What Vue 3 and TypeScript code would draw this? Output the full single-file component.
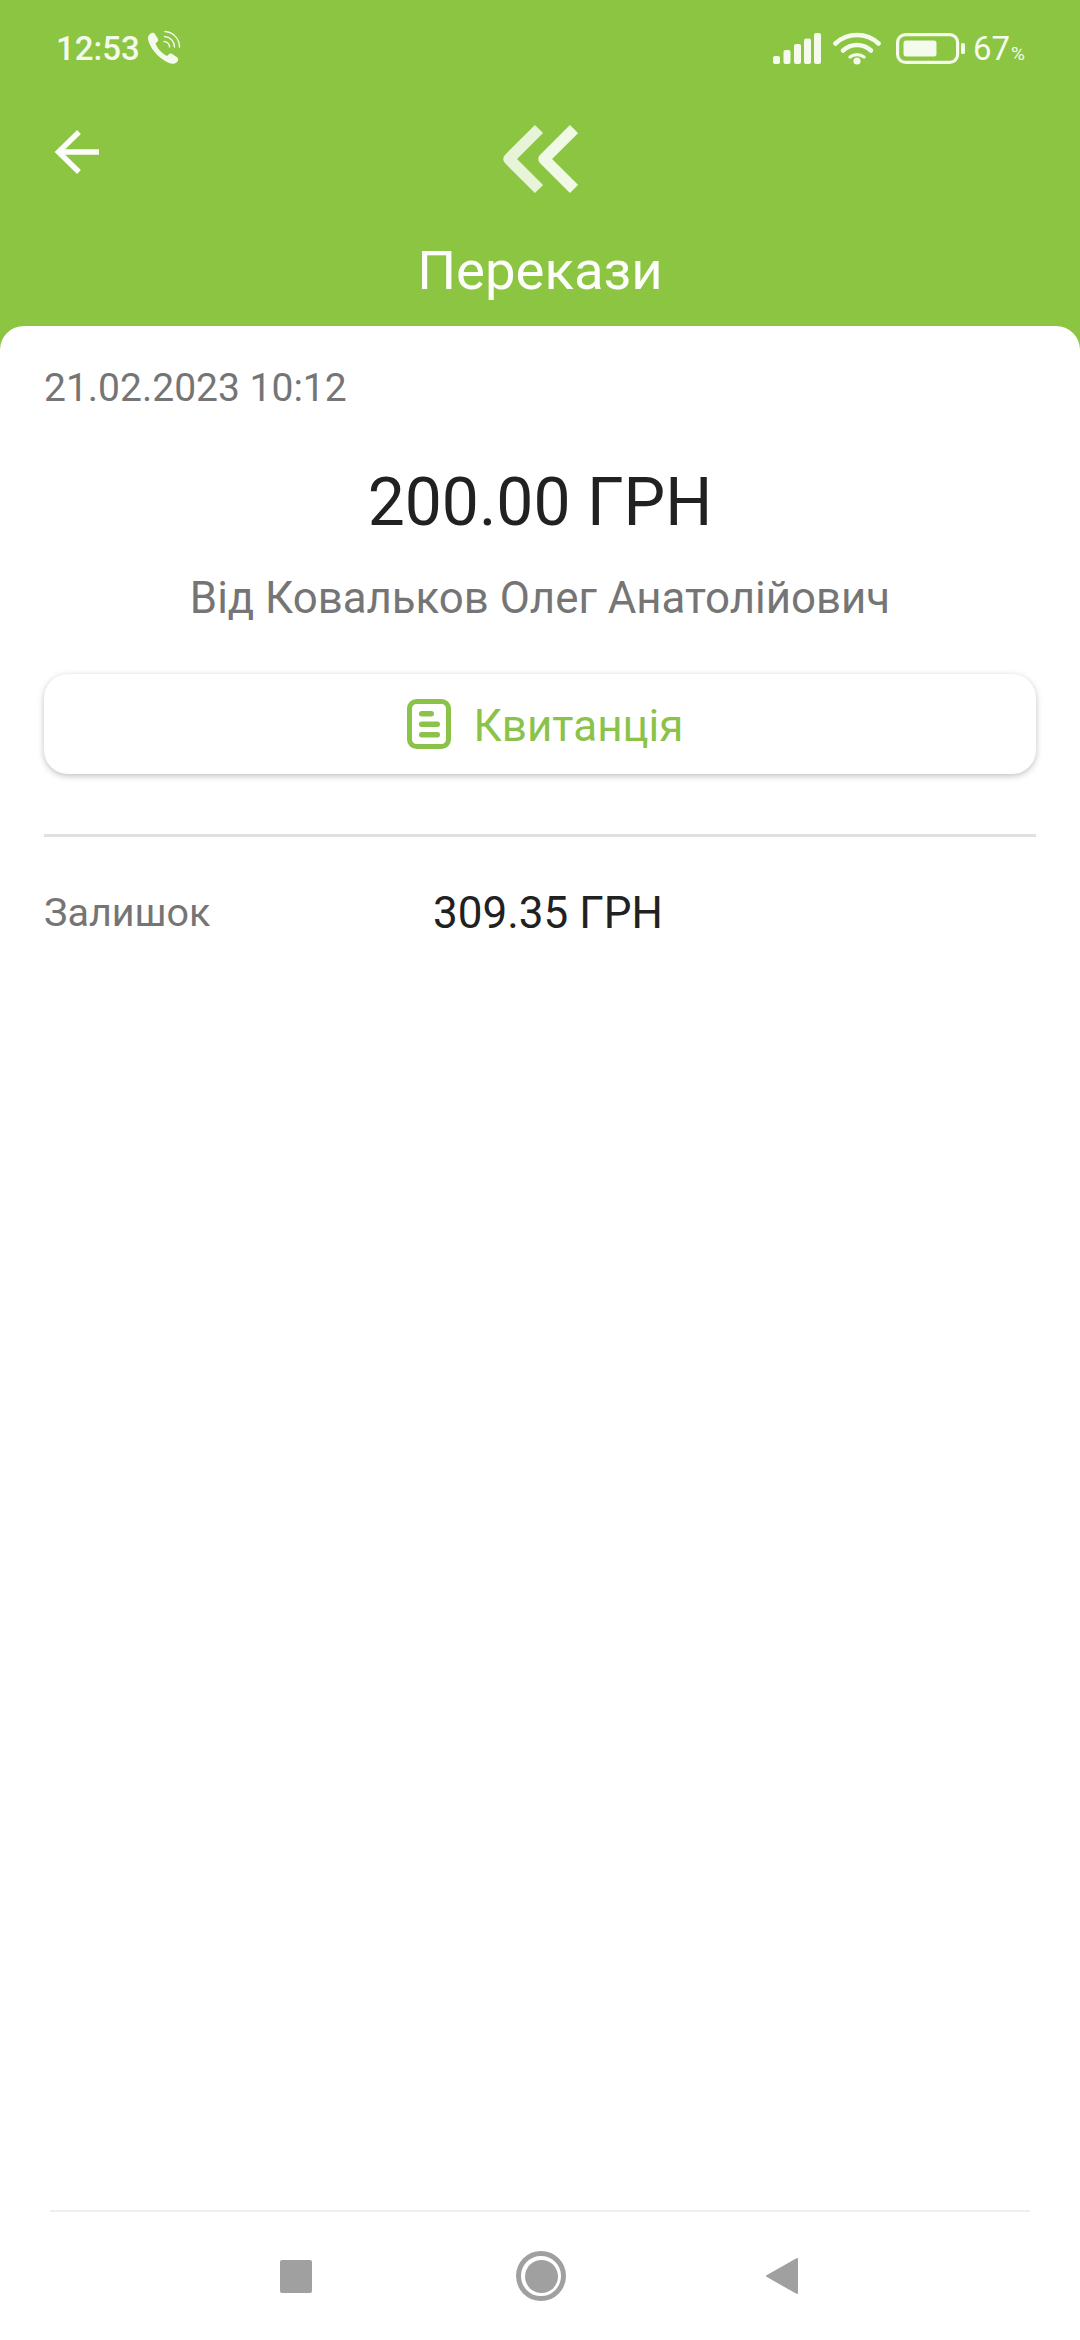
<script setup lang="ts">
const balance = '309.35 ГРН'
</script>

<template>
  <div class="screen">
    <header class="head">
      <div class="status">
        <div class="status-left">
          <span class="time">12:53</span>
          <svg class="phone" width="36" height="36" viewBox="0 0 36 36" fill="none">
            <path d="M4.5 5.5 C6 3.6 8.4 3.2 9.6 4.6 L12.8 9.4 C13.6 10.7 13.2 12 12 13 L10.6 14.2 C11.2 16.6 12.6 19 14.8 21.6 C17.2 24.2 19.6 26 22 27 L23.6 25.4 C24.7 24.4 26 24.2 27.2 25 L32.4 28.6 C33.8 29.8 33.4 32 31.6 33.4 C29.6 35 26.6 35.2 23.4 33.8 C18.4 31.6 13.6 27.8 9.6 23 C5.8 18.4 3.4 13.6 3 9.8 C2.8 8 3.4 6.6 4.5 5.5 Z" fill="#f4faec"/>
            <path d="M19 12.5 A5.5 5.5 0 0 1 24.5 18" stroke="#f4faec" stroke-width="1.4" stroke-linecap="round"/>
            <path d="M19.5 7.5 A10.5 10.5 0 0 1 29.5 18" stroke="#f4faec" stroke-width="1.4" stroke-linecap="round"/>
            <path d="M20 2.5 A15.5 15.5 0 0 1 34.5 18" stroke="#f4faec" stroke-width="1.4" stroke-linecap="round"/>
          </svg>
        </div>
        <div class="status-right">
          <svg class="signal" width="48" height="31" viewBox="0 0 48 31" fill="#f4faec">
            <rect x="0" y="23" width="7" height="8" rx="2"/>
            <rect x="10.5" y="17" width="7" height="14" rx="2"/>
            <rect x="21" y="11" width="7" height="20" rx="2"/>
            <rect x="31" y="5.5" width="7" height="25.5" rx="2"/>
            <rect x="41" y="0" width="7" height="31" rx="2"/>
          </svg>
          <svg class="wifi" width="48" height="33" viewBox="0 0 48 33" fill="none" stroke="#f4faec" stroke-width="4.6" stroke-linecap="round">
            <path d="M2.5 11.5 C14.5 0.2 33.5 0.2 45.5 11.5"/>
            <path d="M10 18.5 C18 11.2 30 11.2 38 18.5"/>
            <path d="M17 25 C21 21.8 27 21.8 31 25" stroke-width="3.4"/>
            <circle cx="24" cy="29" r="3.6" fill="#f4faec" stroke="none"/>
          </svg>
          <svg class="battery" width="69" height="31" viewBox="0 0 69 31" fill="none">
            <rect x="1.6" y="1.6" width="60" height="27.8" rx="8" stroke="#f4faec" stroke-width="3.2"/>
            <rect x="7.5" y="7.5" width="33" height="16" rx="2.5" fill="#f4faec"/>
            <rect x="65" y="10" width="4" height="11" rx="1.6" fill="#f4faec"/>
          </svg>
          <span class="battery-text">67<small>%</small></span>
        </div>
      </div>
      <div class="toolbar">
        <svg class="back" width="46" height="46" viewBox="0 0 46 46" fill="none" stroke="#fdfefb" stroke-width="5.4">
          <path d="M45 23 H4"/>
          <path d="M25 3 L4.5 23 L25 43"/>
        </svg>
        <svg class="logo" width="76" height="70" viewBox="0 0 76 70" fill="none" stroke-width="11.5" stroke-linejoin="round">
          <path d="M37 5 L7 35 L37 65" stroke="#e7f4d8"/>
          <path d="M72 5 L42 35 L72 65" stroke="#f0f8e6"/>
        </svg>
      </div>
      <h1 class="title">Перекази</h1>
    </header>

    <main class="card">
      <div class="date">21.02.2023 10:12</div>
      <div class="amount">200.00 ГРН</div>
      <div class="sender">Від Ковальков Олег Анатолійович</div>
      <button class="receipt" type="button">
        <svg width="44" height="50" viewBox="0 0 44 50" fill="none">
          <rect x="2.5" y="2.5" width="39" height="45" rx="7" stroke="#8bc34a" stroke-width="5"/>
          <rect x="12" y="12" width="15" height="5.5" rx="2.7" fill="#8bc34a"/>
          <rect x="12" y="22.5" width="21" height="5.5" rx="2.7" fill="#8bc34a"/>
          <rect x="12" y="33" width="21" height="5.5" rx="2.7" fill="#8bc34a"/>
        </svg>
        <span class="receipt-label">Квитанція</span>
      </button>
      <hr class="divider" />
      <div class="row">
        <span class="row-label">Залишок</span>
        <span class="row-value">{{ balance }}</span>
      </div>
    </main>

    <nav class="nav">
      <div class="nav-icons">
        <span class="nav-square"></span>
        <span class="nav-circle"><span class="nav-dot"></span></span>
        <svg class="nav-back" width="34" height="38" viewBox="0 0 34 38" fill="#a0a0a0" stroke="#a0a0a0" stroke-width="2" stroke-linejoin="round">
          <path d="M32 2 V36 L2 19 Z"/>
        </svg>
      </div>
    </nav>
  </div>
</template>

<style>
html, body { margin: 0; background: #fff; }
</style>

<style scoped>
.screen {
  width: 1080px;
  height: 2340px;
  display: flex;
  flex-direction: column;
  background: #8bc541;
  font-family: Roboto, "Noto Sans", sans-serif;
  overflow: hidden;
}
.head {
  height: 350px;
  flex: none;
  display: flex;
  flex-direction: column;
  color: #fff;
}
.status {
  height: 96px;
  padding: 0 54px 0 56px;
  display: flex;
  justify-content: space-between;
  align-items: center;
  color: #f4faec;
}
.status-left, .status-right { display: flex; align-items: center; }
.time { font-size: 33px; font-weight: 500; line-height: 1; }
.phone { margin-left: 5px; margin-top: -2px; }
.status-right { margin-top: 1px; }
.wifi { margin-left: 12px; }
.battery { margin-left: 15px; }
.battery-text { margin-left: 8px; font-size: 33px; font-weight: 400; line-height: 1; width: 53px; }
.battery-text small { font-size: 19px; margin-left: 1px; }
.toolbar {
  height: 116px;
  position: relative;
  display: flex;
  justify-content: center;
  align-items: center;
  margin-top: 2px;
}
.back { position: absolute; left: 54px; top: 31px; }
.logo { margin-top: 6px; }
.title {
  margin: 26px 0 0;
  text-align: center;
  font-size: 54.5px;
  font-weight: 400;
  line-height: 60px;
  color: #fdfefb;
}
.card {
  flex: 1;
  margin-top: -24px;
  position: relative;
  background: #fff;
  border-radius: 24px 24px 0 0;
  padding: 37px 44px 0;
  display: flex;
  flex-direction: column;
}
.date { font-size: 39px; line-height: 50px; color: #757575; }
.amount {
  margin-top: 48px;
  text-align: center;
  font-size: 66px;
  line-height: 84px;
  color: #212121;
}
.sender {
  margin-top: 25px;
  text-align: center;
  font-size: 43.8px;
  line-height: 56px;
  color: #757575;
}
.receipt {
  margin-top: 48px;
  height: 100px;
  flex: none;
  border: none;
  border-radius: 24px;
  background: #fff;
  box-shadow: 0 2px 6px rgba(0, 0, 0, 0.25);
  display: flex;
  align-items: center;
  justify-content: center;
  gap: 23px;
  font-family: inherit;
  font-size: 44px;
  color: #8bc34a;
  padding: 0 0 0 10px;
}
.receipt-label { margin-top: 3px; }
.divider {
  margin: 60px 0 0;
  border: none;
  height: 3px;
  background: #e0e0e0;
}
.row {
  margin-top: 48px;
  display: flex;
  align-items: center;
}
.row-label { width: 389px; font-size: 39.5px; line-height: 56px; color: #757575; }
.row-value { font-size: 44px; line-height: 56px; color: #212121; }
.nav {
  height: 130px;
  flex: none;
  background: #fff;
  padding: 0 50px;
}
.nav-icons {
  height: 128px;
  border-top: 2px solid #eeeeee;
  display: flex;
  align-items: center;
  padding-left: 230px;
}
.nav-square {
  width: 32px;
  height: 33px;
  border-radius: 2px;
  background: #a0a0a0;
}
.nav-circle {
  margin-left: 204px;
  width: 50px;
  height: 50px;
  box-sizing: border-box;
  border-radius: 50%;
  border: 5px solid #a0a0a0;
  display: flex;
  align-items: center;
  justify-content: center;
}
.nav-dot {
  width: 33px;
  height: 33px;
  border-radius: 50%;
  background: #a0a0a0;
}
.nav-back { margin-left: 199px; }
</style>
